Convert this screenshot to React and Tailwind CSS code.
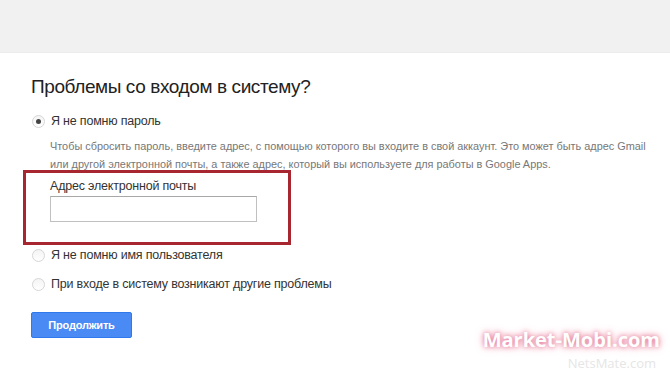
import React from 'react';

const font = { fontFamily: '"Liberation Sans", Arial, sans-serif' };

const Radio = ({ checked }) => (
  <span className="flex h-[13px] w-[13px] items-center justify-center rounded-full border border-[#d6d6d6] bg-gradient-to-b from-[#f4f4f4] to-white">
    {checked && <span className="h-[5px] w-[5px] rounded-full bg-[#444]"></span>}
  </span>
);

const Option = ({ checked, label, className }) => (
  <label className={`flex h-4 items-center ${className}`}>
    <span className="ml-[1px] w-[19px]">
      <Radio checked={checked} />
    </span>
    <span className="text-[12.5px] leading-4 tracking-[-0.2px] text-[#333]">{label}</span>
  </label>
);

export default function App() {
  return (
    <div className="relative h-[372px] w-[670px] overflow-hidden bg-white" style={font}>
      {/* Header band */}
      <div className="h-[53px] border-b border-[#ececec] bg-[#f1f1f1]"></div>

      {/* Form */}
      <div className="pl-[31px]">
        <h1 className="mt-[22px] text-[19px] font-normal leading-6 tracking-[-0.4px] text-[#222]">
          Проблемы со входом в систему?
        </h1>

        <Option checked label="Я не помню пароль" className="mt-[14px]" />

        <p className="mt-2 pl-[19px] text-[10.9px] leading-[18px] text-[#777]">
          Чтобы сбросить пароль, введите адрес, с помощью которого вы входите в свой аккаунт. Это может быть адрес Gmail
          <br />
          или другой электронной почты, а также адрес, который вы используете для работы в Google Apps.
        </p>

        {/* Highlighted email field */}
        <div className="-ml-2 -mt-[3px] w-[268px] border-[3px] border-[#a8262f] pb-5 pl-6 pt-[5px]">
          <div className="text-[12.5px] leading-4 tracking-[-0.2px] text-[#333]">Адрес электронной почты</div>
          <input
            type="text"
            className="mt-[2px] block h-[26px] w-[207px] border border-[#c0c0c0] border-t-[#a8a8a8] bg-white outline-none"
          />
        </div>

        <Option label="Я не помню имя пользователя" className="mt-[2px]" />
        <Option label="При входе в систему возникают другие проблемы" className="mt-[13px]" />

        <button className="mt-5 h-[26px] w-[101px] rounded-[2px] border border-[#3079ed] bg-[#4a8af4] text-[11px] font-bold tracking-[-0.2px] text-white">
          Продолжить
        </button>
      </div>

      {/* Watermark */}
      <div className="absolute bottom-0 right-[10px] flex flex-col items-end">
        <span className="text-[20px] font-bold leading-7 text-white [text-shadow:0_0_5px_#e07090,0_0_10px_#f0a0b4]" style={{ fontFamily: '"Open Sans", "DejaVu Sans", sans-serif' }}>
          Market-Mobi.com
        </span>
        <span className="mr-1 text-[13px] leading-[18px] text-[#e6e6e6]" style={{ fontFamily: '"Open Sans", sans-serif' }}>
          NetsMate.com
        </span>
      </div>
    </div>
  );
}
